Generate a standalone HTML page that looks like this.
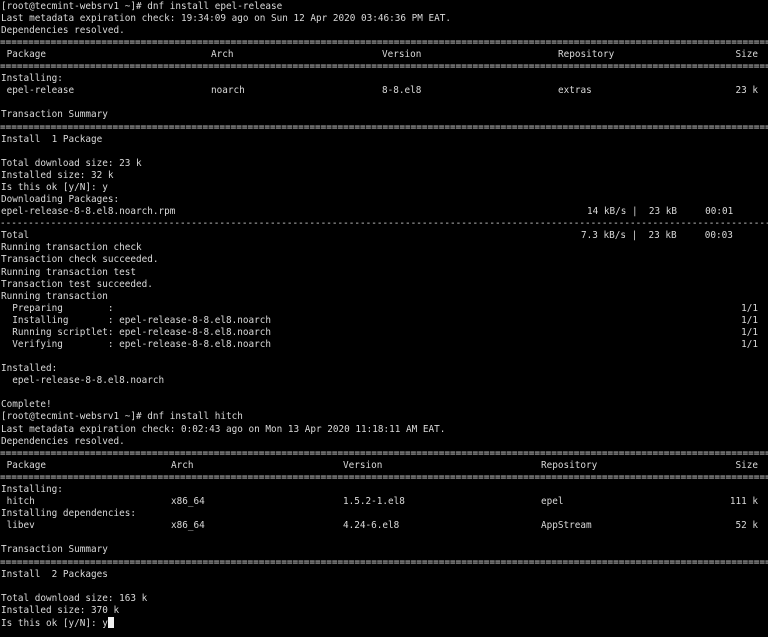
<!DOCTYPE html>
<html><head><meta charset="utf-8"><style>
html,body{margin:0;padding:0;background:#000;}
body{width:768px;height:636px;position:relative;overflow:hidden;font-family:"DejaVu Sans Mono","Liberation Mono",monospace;font-size:9.35px;color:#dadada;}
#w{position:absolute;left:0;top:1px;width:768px;height:636px;}
.l{position:absolute;left:1px;white-space:pre;line-height:12px;height:12px;}
.r{position:absolute;white-space:pre;line-height:12px;}
.sep{position:absolute;left:0;width:768px;overflow:hidden;white-space:pre;line-height:12px;}
.cur{display:inline-block;width:6px;height:11px;background:#f0f0f0;vertical-align:-2px;}
</style></head><body><div id="w">
<div class="l" style="top:0">[root@tecmint-websrv1 ~]# dnf install epel-release</div>
<div class="l" style="top:12px">Last metadata expiration check: 19:34:09 ago on Sun 12 Apr 2020 03:46:36 PM EAT.</div>
<div class="l" style="top:24px">Dependencies resolved.</div>
<div class="sep" style="top:36px">==========================================================================================================================================================</div>
<div class="l" style="top:48px"> Package</div><div class="r" style="top:48px;left:211px">Arch</div><div class="r" style="top:48px;left:382px">Version</div><div class="r" style="top:48px;left:558px">Repository</div><div class="r" style="top:48px;right:10px">Size</div>
<div class="sep" style="top:60px">==========================================================================================================================================================</div>
<div class="l" style="top:72px">Installing:</div>
<div class="l" style="top:84px"> epel-release</div><div class="r" style="top:84px;left:211px">noarch</div><div class="r" style="top:84px;left:382px">8-8.el8</div><div class="r" style="top:84px;left:558px">extras</div><div class="r" style="top:84px;right:10px">23 k</div>
<div class="l" style="top:108px">Transaction Summary</div>
<div class="sep" style="top:121px">==========================================================================================================================================================</div>
<div class="l" style="top:133px">Install  1 Package</div>
<div class="l" style="top:157px">Total download size: 23 k</div>
<div class="l" style="top:169px">Installed size: 32 k</div>
<div class="l" style="top:181px">Is this ok [y/N]: y</div>
<div class="l" style="top:193px">Downloading Packages:</div>
<div class="l" style="top:205px">epel-release-8-8.el8.noarch.rpm</div><div class="r" style="top:205px;left:587px">14 kB/s |  23 kB     00:01</div>
<div class="sep" style="top:217px">----------------------------------------------------------------------------------------------------------------------------------------------------------</div>
<div class="l" style="top:229px">Total</div><div class="r" style="top:229px;left:581px">7.3 kB/s |  23 kB     00:03</div>
<div class="l" style="top:241px">Running transaction check</div>
<div class="l" style="top:253px">Transaction check succeeded.</div>
<div class="l" style="top:266px">Running transaction test</div>
<div class="l" style="top:278px">Transaction test succeeded.</div>
<div class="l" style="top:290px">Running transaction</div>
<div class="l" style="top:302px">  Preparing        :</div><div class="r" style="top:302px;right:10px">1/1</div>
<div class="l" style="top:314px">  Installing       : epel-release-8-8.el8.noarch</div><div class="r" style="top:314px;right:10px">1/1</div>
<div class="l" style="top:326px">  Running scriptlet: epel-release-8-8.el8.noarch</div><div class="r" style="top:326px;right:10px">1/1</div>
<div class="l" style="top:338px">  Verifying        : epel-release-8-8.el8.noarch</div><div class="r" style="top:338px;right:10px">1/1</div>
<div class="l" style="top:362px">Installed:</div>
<div class="l" style="top:374px">  epel-release-8-8.el8.noarch</div>
<div class="l" style="top:398px">Complete!</div>
<div class="l" style="top:410px">[root@tecmint-websrv1 ~]# dnf install hitch</div>
<div class="l" style="top:423px">Last metadata expiration check: 0:02:43 ago on Mon 13 Apr 2020 11:18:11 AM EAT.</div>
<div class="l" style="top:435px">Dependencies resolved.</div>
<div class="sep" style="top:447px">==========================================================================================================================================================</div>
<div class="l" style="top:459px"> Package</div><div class="r" style="top:459px;left:171px">Arch</div><div class="r" style="top:459px;left:343px">Version</div><div class="r" style="top:459px;left:541px">Repository</div><div class="r" style="top:459px;right:10px">Size</div>
<div class="sep" style="top:471px">==========================================================================================================================================================</div>
<div class="l" style="top:483px">Installing:</div>
<div class="l" style="top:495px"> hitch</div><div class="r" style="top:495px;left:171px">x86_64</div><div class="r" style="top:495px;left:343px">1.5.2-1.el8</div><div class="r" style="top:495px;left:541px">epel</div><div class="r" style="top:495px;right:10px">111 k</div>
<div class="l" style="top:507px">Installing dependencies:</div>
<div class="l" style="top:519px"> libev</div><div class="r" style="top:519px;left:171px">x86_64</div><div class="r" style="top:519px;left:343px">4.24-6.el8</div><div class="r" style="top:519px;left:541px">AppStream</div><div class="r" style="top:519px;right:10px">52 k</div>
<div class="l" style="top:543px">Transaction Summary</div>
<div class="sep" style="top:556px">==========================================================================================================================================================</div>
<div class="l" style="top:568px">Install  2 Packages</div>
<div class="l" style="top:592px">Total download size: 163 k</div>
<div class="l" style="top:604px">Installed size: 370 k</div>
<div class="l" style="top:616px">Is this ok [y/N]: y<span class="cur"></span></div>
</div></body></html>
